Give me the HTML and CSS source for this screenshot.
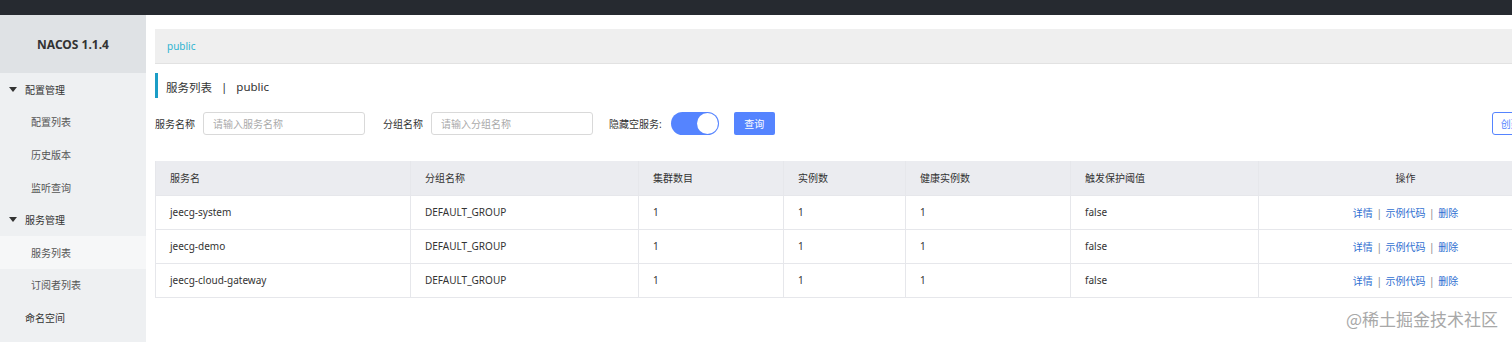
FILE: index.html
```html
<!DOCTYPE html>
<html lang="zh-CN">
<head>
  <meta charset="UTF-8">
  <title>NACOS 1.1.4</title>
  <link rel="stylesheet" href="styles.css">
</head>
<body>
  <div class="top-bar"></div>

  <div class="layout">
    <div class="sidebar">
      <div class="brand">NACOS 1.1.4</div>
      <div class="menu-group"><span class="caret"></span>配置管理</div>
      <div class="menu-item">配置列表</div>
      <div class="menu-item">历史版本</div>
      <div class="menu-item">监听查询</div>
      <div class="menu-group"><span class="caret"></span>服务管理</div>
      <div class="menu-item active">服务列表</div>
      <div class="menu-item">订阅者列表</div>
      <div class="menu-group plain">命名空间</div>
    </div>

    <div class="main">
      <div class="breadcrumb">public</div>

      <div class="page-title">服务列表 <span class="sep">|</span> public</div>

      <div class="filters">
        <label>服务名称</label>
        <input type="text" placeholder="请输入服务名称">
        <label class="second">分组名称</label>
        <input type="text" placeholder="请输入分组名称">
        <label class="third">隐藏空服务:</label>
        <span class="switch"><span class="knob"></span></span>
        <button class="btn-primary">查询</button>
        <button class="btn-outline">创建服务</button>
      </div>

      <table class="grid">
        <thead>
          <tr>
            <th class="c1">服务名</th>
            <th class="c2">分组名称</th>
            <th class="c3">集群数目</th>
            <th class="c4">实例数</th>
            <th class="c5">健康实例数</th>
            <th class="c6">触发保护阈值</th>
            <th class="ops">操作</th>
          </tr>
        </thead>
        <tbody>
          <tr>
            <td>jeecg-system</td><td>DEFAULT_GROUP</td><td>1</td><td>1</td><td>1</td><td>false</td>
            <td class="ops"><a>详情</a> <span class="bar">|</span> <a>示例代码</a> <span class="bar">|</span> <a>删除</a></td>
          </tr>
          <tr>
            <td>jeecg-demo</td><td>DEFAULT_GROUP</td><td>1</td><td>1</td><td>1</td><td>false</td>
            <td class="ops"><a>详情</a> <span class="bar">|</span> <a>示例代码</a> <span class="bar">|</span> <a>删除</a></td>
          </tr>
          <tr>
            <td>jeecg-cloud-gateway</td><td>DEFAULT_GROUP</td><td>1</td><td>1</td><td>1</td><td>false</td>
            <td class="ops"><a>详情</a> <span class="bar">|</span> <a>示例代码</a> <span class="bar">|</span> <a>删除</a></td>
          </tr>
        </tbody>
      </table>
    </div>
  </div>

  <div class="watermark">@稀土掘金技术社区</div>
</body>
</html>
```

FILE: styles.css
```css
* {
  margin: 0;
  padding: 0;
  box-sizing: border-box;
}

body {
  width: 1512px;
  height: 342px;
  overflow: hidden;
  position: relative;
  background: #fff;
  color: #333;
  font-family: "Noto Sans", "Noto Sans CJK SC", sans-serif;
  font-size: 10px;
}

.top-bar {
  height: 15px;
  background: #262a30;
}

.layout {
  display: flex;
  height: 327px;
}

/* sidebar */
.sidebar {
  width: 146px;
  flex-shrink: 0;
  background: #eef0f2;
}

.brand {
  height: 58px;
  background: #dfe2e5;
  display: flex;
  align-items: center;
  justify-content: center;
  font-weight: bold;
  font-size: 12px;
  color: #333;
}

.menu-group {
  height: 32.6px;
  display: flex;
  align-items: center;
  padding-left: 9px;
  color: #333;
}

.menu-group.plain {
  padding-left: 25px;
}

.caret {
  width: 0;
  height: 0;
  border-left: 4px solid transparent;
  border-right: 4px solid transparent;
  border-top: 5px solid #333;
  margin-right: 8px;
}

.menu-item {
  height: 32.6px;
  display: flex;
  align-items: center;
  padding-left: 31px;
  color: #555;
}

.menu-item.active {
  background: #f6f7f8;
}

/* main */
.main {
  flex: 1;
  padding-left: 9px;
  overflow: hidden;
}

.breadcrumb {
  margin-top: 14px;
  height: 35px;
  background: #efefef;
  border-bottom: 1px solid #e2e2e2;
  display: flex;
  align-items: center;
  padding-left: 12px;
  color: #2fb4d1;
  font-size: 10px;
}

.page-title {
  margin-top: 9px;
  height: 25px;
  border-left: 3px solid #1b9dc6;
  padding-left: 8px;
  padding-top: 2px;
  display: flex;
  align-items: center;
  font-size: 11.5px;
  color: #333;
  white-space: pre;
}

.page-title .sep {
  margin: 0 6px;
}

.filters {
  margin-top: 14px;
  height: 23px;
  display: flex;
  align-items: center;
  white-space: nowrap;
}

.filters > * {
  flex-shrink: 0;
}

.filters label {
  font-size: 10px;
  color: #333;
  margin-right: 8px;
}

.filters label.second {
  margin-left: 18px;
}

.filters label.third {
  margin-left: 16px;
  margin-right: 9px;
}

.filters input {
  width: 162px;
  height: 23px;
  border: 1px solid #d9d9d9;
  border-radius: 3px;
  padding-left: 9px;
  font-family: inherit;
  font-size: 10px;
  outline: none;
}

.filters input::placeholder {
  color: #aaa;
}

.switch {
  width: 48px;
  height: 23px;
  border-radius: 12px;
  background: #5584ff;
  position: relative;
  display: inline-block;
}

.knob {
  position: absolute;
  right: 1px;
  top: 1px;
  width: 21px;
  height: 21px;
  border-radius: 50%;
  background: #fff;
}

.btn-primary {
  margin-left: 15px;
  width: 41px;
  height: 23px;
  background: #5584ff;
  color: #fff;
  border: none;
  border-radius: 2px;
  font-family: inherit;
  font-size: 10px;
}

.btn-outline {
  margin-left: 717px;
  width: 70px;
  height: 23px;
  background: #fff;
  color: #5584ff;
  border: 1px solid #5584ff;
  border-radius: 3px;
  font-family: inherit;
  font-size: 10px;
  text-align: left;
  padding-left: 8px;
}

/* table */
.grid {
  margin-top: 26px;
  width: 1397px;
  border-collapse: collapse;
  table-layout: fixed;
  border-left: 1px solid #e6e7eb;
}

.grid th,
.grid td {
  height: 34px;
  text-align: left;
  padding-left: 14px;
  font-weight: normal;
  font-size: 10px;
  border-bottom: 1px solid #e6e7eb;
  border-right: 1px solid #e6e7eb;
  white-space: nowrap;
}

.grid th {
  background: #ebecf0;
  color: #333;
}

.grid td {
  color: #333;
}

.grid .c1 { width: 255px; }
.grid .c2 { width: 228px; }
.grid .c3 { width: 145px; }
.grid .c4 { width: 122px; }
.grid .c5 { width: 165px; }
.grid .c6 { width: 188px; }

.grid .ops {
  text-align: center;
  padding-left: 0;
  border-right: none;
}

.grid .ops a {
  color: #2f6fd1;
}

.grid .ops .bar {
  color: #888;
  margin: 0 1px;
}

.watermark {
  position: absolute;
  right: 14px;
  bottom: 11px;
  font-size: 17px;
  color: #a8a8a8;
  font-family: "Noto Sans CJK SC", sans-serif;
}
```
